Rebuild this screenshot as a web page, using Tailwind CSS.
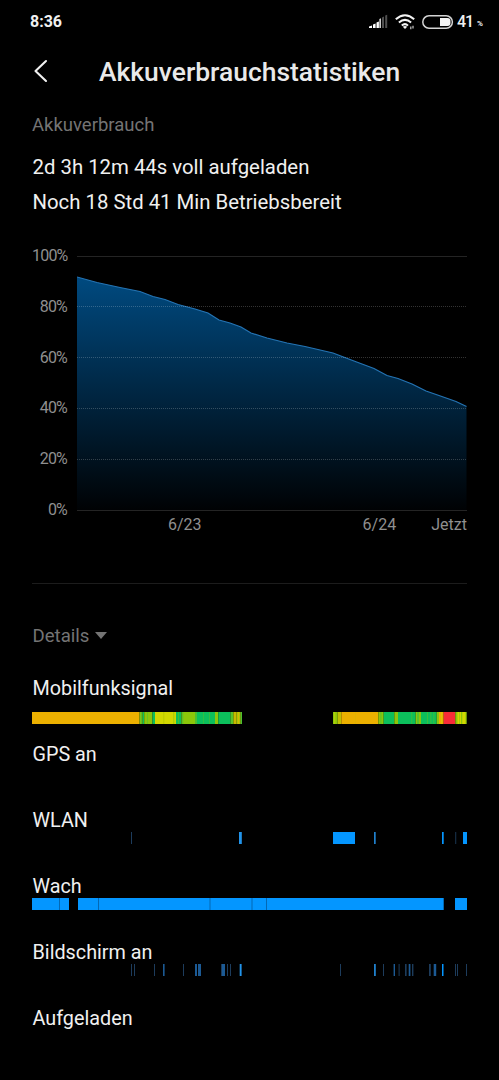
<!DOCTYPE html>
<html lang="de">
<head>
    <meta charset="UTF-8">
    <meta name="viewport" content="width=device-width, initial-scale=1.0">
    <title>Akkuverbrauchstatistiken</title>
    <script src="https://cdn.jsdelivr.net/npm/@tailwindcss/browser@4"></script>
</head>
<body class="bg-black text-[#f0f0f0] font-['Roboto',sans-serif] h-[1080px] overflow-hidden">

    <!-- Statusleiste -->
    <div class="flex h-[43px] items-center justify-between pl-[30px] pr-4">
        <span class="text-base font-bold leading-none">8:36</span>
        <div class="flex items-center">
            <svg class="w-5 h-4" viewBox="0 0 20 16">
                <path fill="#fff" d="M0 14v-1.5l3-1V14zM4 14v-3.5l2.6-1V14zM7.5 14V8.4l2.4-1V14z"/>
                <path fill="#ccc" d="M10.3 14V5l1.7-.7V14z"/>
                <path fill="#505050" d="M13 14V3.4l2-.9V14zM16.2 14V1.6l2-.9V14z"/>
            </svg>
            <svg class="ml-[6px] w-5 h-4" viewBox="0 0 20 16" fill="none" stroke="#f4f4f4" stroke-width="2">
                <path d="M.8 5.2Q10-2.8 19.2 5.2M3.9 8.6Q10 3.2 16.1 8.6M6.8 11.6Q10 8.6 13 11.6"/>
                <path d="M7.8 12.8 10 15l2.2-2.2Q10 11.2 7.8 12.8z" fill="#f4f4f4" stroke="none"/>
                <path d="M15.8 12.4v2.8M18 11.8v2.8" stroke="#bbb" stroke-width="1.3"/>
            </svg>
            <svg class="ml-[7px] w-8 h-[14px]" viewBox="0 0 32 14">
                <rect x=".8" y=".8" width="29.6" height="12.4" rx="6.2" fill="none" stroke="#d4d4d4" stroke-width="1.5"/>
                <path d="M18 3h7.5a3 3 0 0 1 3 3v2a3 3 0 0 1-3 3H18z" fill="#f4f4f4"/>
            </svg>
            <span class="ml-[3px] w-[14px] text-base font-medium leading-none tracking-[-1.2px]">41</span>
            <span class="ml-[6px] mt-1 text-[8px] font-bold leading-none">%</span>
        </div>
    </div>

    <!-- Kopfzeile -->
    <header class="flex h-14 items-center pl-8">
        <svg class="w-4 h-6 shrink-0" viewBox="0 0 16 24" fill="none" stroke="#f0f0f0" stroke-width="2.1" stroke-linecap="round" stroke-linejoin="round">
            <path d="M14 2 3.5 12 14 22"/>
        </svg>
        <h1 class="ml-[51px] mt-[3px] text-[26.45px] font-medium leading-none whitespace-nowrap text-[#e9e9e9]">Akkuverbrauchstatistiken</h1>
    </header>

    <main class="px-8">
        <p class="mt-4 text-[18.5px] leading-5 text-[#747474]">Akkuverbrauch</p>
        <div class="mt-[15px] pl-[0.5px] text-[20.35px] leading-[34.5px] whitespace-nowrap">
            <p>2d 3h 12m 44s voll aufgeladen</p>
            <p>Noch 18 Std 41 Min Betriebsbereit</p>
        </div>

        <!-- Ladestand -->
        <div class="mt-[27px] flex">
            <div class="flex h-[273px] w-[35px] flex-col justify-between text-right text-base leading-[19px] tracking-[-0.8px] text-[#8f8f8f]">
                <span>100%</span>
                <span>80%</span>
                <span>60%</span>
                <span>40%</span>
                <span>20%</span>
                <span>0%</span>
            </div>
            <svg class="ml-[10px] mt-[10px] w-[390px] h-[256px]" viewBox="77 256 390 256">
                <defs>
                    <linearGradient id="level" gradientUnits="userSpaceOnUse" x1="0" y1="277" x2="0" y2="510">
                        <stop offset="0" stop-color="#004a80"/>
                        <stop offset="1" stop-color="#000204"/>
                    </linearGradient>
                </defs>
                <path fill="url(#level)" d="M77 277L97 282.5 120 287.5 140 291.5 153 296.5 165 299.5 178 304.5 195 309 208 313 219 320 230 323 241 327 251 333 267 338 287 343 305 346.5 333 353 354 361 374 368.5 387 375.5 398 378.5 412 384 426 391 439 395.5 456 401.5 466.5 406.5V510H77z"/>
                <path fill="none" stroke="#2474b4" stroke-width="1.2" d="M77 277L97 282.5 120 287.5 140 291.5 153 296.5 165 299.5 178 304.5 195 309 208 313 219 320 230 323 241 327 251 333 267 338 287 343 305 346.5 333 353 354 361 374 368.5 387 375.5 398 378.5 412 384 426 391 439 395.5 456 401.5 466.5 406.5"/>
                <path stroke="#fff" stroke-opacity=".14" d="M77 256.5h390M77 510.5h390"/>
                <path stroke="#fff" stroke-opacity=".2" stroke-dasharray="1 1" d="M77 306.5h390M77 357.5h390M77 408.5h390M77 459.5h390"/>
            </svg>
        </div>
        <div class="flex h-5 items-center text-base text-[#8f8f8f] -mt-[4px]">
            <span class="ml-[136px]">6/23</span>
            <span class="ml-[161px]">6/24</span>
            <span class="ml-auto">Jetzt</span>
        </div>

        <hr class="mt-12 border-[#1c1c1c]">

        <div class="mt-[43px] flex h-5 items-center pl-[0.5px] text-[18.6px] text-[#747474]">
            <span>Details</span>
            <svg class="ml-[6px] mb-[3px] w-3 h-[7px]" viewBox="0 0 12 7"><path fill="#747474" d="M0 0h12L6 7z"/></svg>
        </div>

        <!-- Verlauf -->
        <div class="mt-[29px] text-[19.8px] leading-[26px] [&>div]:h-[66px] [&_p]:h-6 [&_p]:pl-[0.5px] [&_svg]:h-3 [&_svg]:w-[435px]">
            <div>
                <p>Mobilfunksignal</p>
                <svg id="signal" class="mt-3" viewBox="32 0 435 12"></svg>
            </div>
            <div>
                <p>GPS an</p>
            </div>
            <div>
                <p>WLAN</p>
                <svg id="wlan" viewBox="32 0 435 12"></svg>
            </div>
            <div>
                <p>Wach</p>
                <svg id="wach" viewBox="32 0 435 12"></svg>
            </div>
            <div>
                <p>Bildschirm an</p>
                <svg id="screen" viewBox="32 0 435 12"></svg>
            </div>
            <div>
                <p>Aufgeladen</p>
            </div>
        </div>
    </main>

    <script>
        const gold = "#ecb000", lime = "#8cc60a", green = "#0cbf5c", mid = "#4cc030", yellow = "#d2d800", red = "#f82c38";
        const blue = "#0496ff", dim = "#1d3c5c", soft = "#1c5a94";

        // [start, ende, farbe]
        const bars = {
            signal: [
                [32, 139.5, gold], [139.5, 142.7, lime], [140.8, 141.8, mid], [142.7, 144.2, green], [144.2, 152.5, lime], [147.5, 148, mid],
                [152.5, 155, green], [155, 176, yellow], [163.5, 164.2, "#b0c400"], [173.5, 174.2, lime], [176, 181.5, green], [178, 178.8, mid],
                [181.5, 195, lime], [182.3, 183.2, mid], [195, 197, mid], [197, 215, green], [203, 203.6, mid], [209, 209.6, mid],
                [215, 218.3, lime], [218.3, 230.7, green], [230.7, 233.7, lime], [231.6, 232.4, green], [233.7, 236.7, "#c8b800"],
                [236.7, 240.7, "#a8c808"], [238, 238.7, gold], [240.7, 242, mid],
                [333, 337.7, lime], [334.5, 335.2, yellow], [337.7, 341.3, "#c0c000"], [341.3, 378.3, gold], [355, 355.5, "#d8b800"],
                [378.3, 383.7, lime], [380.5, 381.3, mid], [383.7, 394.3, green], [394.3, 398, lime], [398, 415.7, green], [411.5, 412.2, mid],
                [415.7, 421, lime], [417.6, 418.4, green], [421, 436.7, green], [427, 427.7, mid], [430.5, 431.3, mid], [433.5, 434.3, mid],
                [436.7, 439, lime], [439, 443.7, gold], [441, 441.7, yellow], [443.7, 455.3, red], [455.3, 466.7, lime],
                [457.5, 461, yellow], [462.3, 465.5, yellow], [459, 459.6, lime]
            ],
            wlan: [
                [131, 132, dim], [239, 241.8, "#2294ea"], [333, 355, blue], [374, 375.7, "#2080cc"], [442, 443.7, blue],
                [455.3, 456.2, dim], [463, 467, blue]
            ],
            wach: [
                [32, 69, blue], [59, 60, "#0468b4"], [78, 443.7, blue], [98, 99, "#0468b4"], [209.5, 210.5, "#0468b4"],
                [251.5, 252.5, "#0468b4"], [266, 267, "#0468b4"], [455, 467, blue]
            ],
            screen: [
                [131, 132, dim], [134, 135, dim], [154, 155, dim], [163, 164.6, soft], [183, 184, dim], [195, 197, soft], [198, 201, soft],
                [221, 222, dim], [222, 225, soft], [227, 228, dim], [230, 231, dim], [239.7, 241.6, "#2294ea"],
                [340, 341, dim], [374, 375.8, "#2080cc"], [383, 384, dim], [393.6, 395, soft], [398.6, 399.6, dim], [405, 406.6, dim],
                [408.7, 410.4, soft], [412, 413.4, dim], [429, 430.8, dim], [433.7, 436.2, soft], [442, 443.5, blue],
                [455, 456, dim], [457, 458, dim], [466, 467, dim]
            ]
        };

        for (const id in bars) {
            document.getElementById(id).innerHTML = bars[id]
                .map(([a, b, c]) => `<rect x="${a}" width="${b - a}" height="12" fill="${c}"/>`)
                .join("");
        }
    </script>

</body>
</html>
